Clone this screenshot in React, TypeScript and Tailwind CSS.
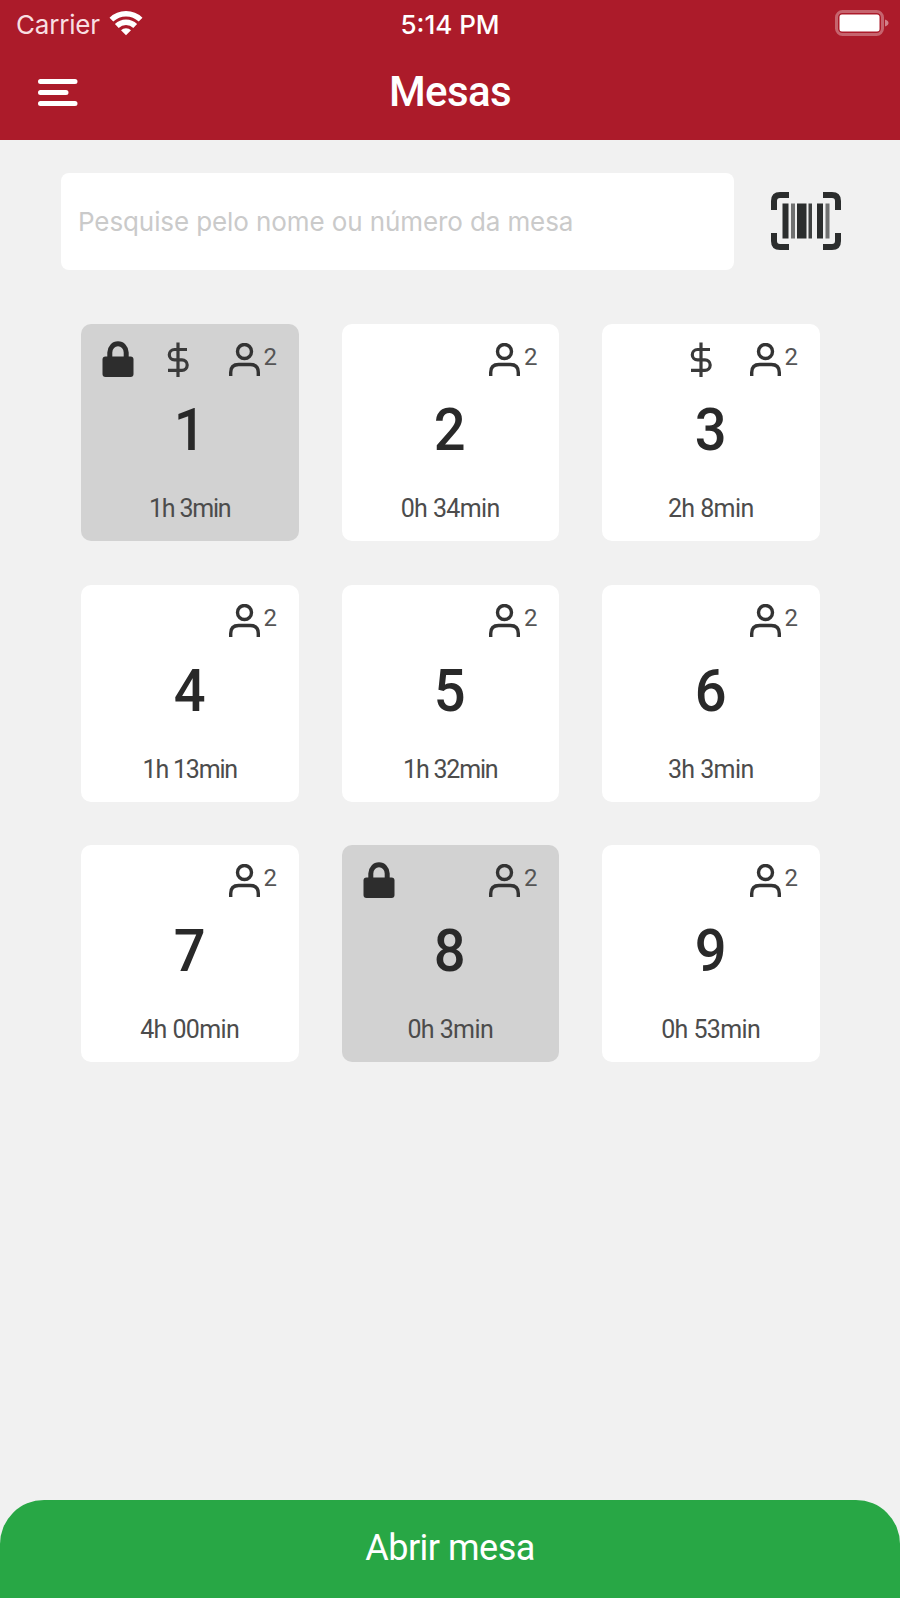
interface Table {
  number: number
  time: string
  people: number
  locked?: boolean
  paying?: boolean
}

const tables: Table[] = [
  { number: 1, time: '1h 3min', people: 2, locked: true, paying: true },
  { number: 2, time: '0h 34min', people: 2 },
  { number: 3, time: '2h 8min', people: 2, paying: true },
  { number: 4, time: '1h 13min', people: 2 },
  { number: 5, time: '1h 32min', people: 2 },
  { number: 6, time: '3h 3min', people: 2 },
  { number: 7, time: '4h 00min', people: 2 },
  { number: 8, time: '0h 3min', people: 2, locked: true },
  { number: 9, time: '0h 53min', people: 2 },
]

function WifiIcon() {
  return (
    <svg width="34" height="26" viewBox="0 0 34 26" fill="none" stroke="white" strokeWidth="5.4">
      <path d="M2.400 9.600a21 21 0 0 1 29.200 0" />
      <path d="M7.800 16a13.200 13.200 0 0 1 18.400 0" />
      <path d="M12 20.300a7 7 0 0 1 10 0L17 25.200z" fill="white" stroke="none" />
    </svg>
  )
}

function BatteryIcon() {
  return (
    <svg width="54" height="26" viewBox="0 0 54 26" fill="none">
      <rect x="1.500" y="1.500" width="46" height="23" rx="6" stroke="white" strokeOpacity="0.32" strokeWidth="3" />
      <rect x="4.500" y="4.500" width="40" height="17" rx="2.500" fill="white" />
      <path d="M50 9.500c2.500.8 3.500 2 3.500 3.500s-1 2.700-3.500 3.500z" fill="white" fillOpacity="0.45" />
    </svg>
  )
}

function MenuIcon() {
  return (
    <svg width="40" height="30" viewBox="0 0 40 30" stroke="white" strokeWidth="5" strokeLinecap="round">
      <path d="M2.500 4.500h34.500M2.500 15.500h25.500M2.500 26.500h34.500" />
    </svg>
  )
}

function BarcodeIcon() {
  return (
    <svg width="70" height="58" viewBox="0 0 70 58" fill="#2b2d2d">
      <path
        d="M18 3H9Q3 3 3 9v9M52 3h9q6 0 6 6v9M3 41v8q0 6 6 6h9M67 41v8q0 6-6 6h-9"
        fill="none"
        stroke="#2b2d2d"
        strokeWidth="6"
      />
      <rect x="11.500" y="11.500" width="6" height="35" />
      <rect x="20" y="11.500" width="4" height="35" opacity="0.65" />
      <rect x="26" y="11.500" width="9.500" height="35" />
      <rect x="37.500" y="11.500" width="3.500" height="35" opacity="0.9" />
      <rect x="46" y="11.500" width="6" height="35" />
      <rect x="54.500" y="11.500" width="4" height="35" opacity="0.65" />
    </svg>
  )
}

function LockIcon() {
  return (
    <svg width="32" height="36" viewBox="0 0 32 36">
      <path d="M7.800 18V11.500a8.200 8.700 0 0 1 16.400 0V18" fill="none" stroke="#2d2d2d" strokeWidth="5" />
      <rect x="0.500" y="15.500" width="31" height="20.500" rx="3" fill="#2d2d2d" />
    </svg>
  )
}

function DollarIcon() {
  return (
    <svg width="22" height="36" viewBox="0 0 22 36" fill="none" stroke="#3a3a3a" strokeWidth="3.200">
      <path d="M11 0.500v34.500M20 7.500H7.500a5.200 5.200 0 0 0 0 10.400h7.500a5.200 5.200 0 0 1 0 10.400H1" />
    </svg>
  )
}

function PersonIcon() {
  return (
    <svg width="32" height="34" viewBox="0 0 32 34" fill="none" stroke="#333333" strokeWidth="3.400">
      <circle cx="15.500" cy="8.500" r="7" />
      <path d="M1.700 33v-3.500q0-8 8-8h11.600q8 0 8 8V33" />
    </svg>
  )
}

function TableCard({ table }: { table: Table }) {
  return (
    <div
      className={`flex h-[217px] w-[217.500px] flex-col rounded-[10px] ${table.locked ? 'bg-[#d2d2d2]' : 'bg-white'}`}
    >
      <div className="flex h-[73px] items-start pt-[17px] pr-[21px] pl-[21px]">
        {table.locked && <LockIcon />}
        {table.paying && (
          <div className={table.locked ? 'mt-px ml-[33px]' : 'mt-px ml-[67px]'}>
            <DollarIcon />
          </div>
        )}
        <div className="mt-[2px] ml-auto flex items-start gap-[3px]">
          <PersonIcon />
          <span className="mt-[2px] w-[14px] text-[24px] leading-[24px] text-[#555555]">{table.people}</span>
        </div>
      </div>
      <div className="text-center text-[59px] leading-[66px] font-medium text-[#292929]">
        <span className="inline-block scale-x-95">{table.number}</span>
      </div>
      <div
        className={`mt-[31px] text-center text-[25px] leading-[30px] text-[#4c4c4c] ${table.time.startsWith('1') ? 'tracking-[-1.2px]' : 'tracking-[-0.6px]'}`}
      >
        {table.time}
      </div>
    </div>
  )
}

export default function App() {
  return (
    <div className="flex h-[1598px] w-[900px] flex-col bg-[#f1f1f1] font-['Roboto',sans-serif]">
      <header className="h-[140px] bg-[#ac1b2a] text-white">
        <div className="grid h-[48px] grid-cols-3 items-center font-['Inter',sans-serif] text-[26px]">
          <div className="flex items-center gap-[9px] pl-[16px]">
            <span className="tracking-[-0.2px] text-[#f8dfe1]">Carrier</span>
            <div className="-mt-[3px]">
              <WifiIcon />
            </div>
          </div>
          <span className="text-center font-medium">5:14 PM</span>
          <div className="-mt-[3px] flex justify-end pr-[11px]">
            <BatteryIcon />
          </div>
        </div>
        <div className="grid h-[88px] grid-cols-3 items-center">
          <button className="w-fit pl-[38px]" aria-label="Menu">
            <MenuIcon />
          </button>
          <h1 className="text-center text-[42px] leading-[48px] font-medium tracking-[-0.6px]">Mesas</h1>
        </div>
      </header>

      <main className="flex-1">
        <div className="flex items-center gap-[37px] pt-[33px] pl-[61px]">
          <input
            className="h-[97px] w-[673px] rounded-lg bg-white px-[17px] font-['Inter',sans-serif] text-[26px] tracking-[-0.1px] outline-none placeholder:text-[#cacaca]"
            placeholder="Pesquise pelo nome ou número da mesa"
          />
          <div className="-mt-[2px]">
            <BarcodeIcon />
          </div>
        </div>
        <div className="mt-[54px] grid w-fit grid-cols-3 gap-x-[43px] gap-y-[43.500px] pl-[81px]">
          {tables.map((table) => (
            <TableCard key={table.number} table={table} />
          ))}
        </div>
      </main>

      <button className="h-[98px] rounded-t-[44px] bg-[#28a745] pb-[3px] text-[36px] tracking-[-0.5px] text-white">
        Abrir mesa
      </button>
    </div>
  )
}
